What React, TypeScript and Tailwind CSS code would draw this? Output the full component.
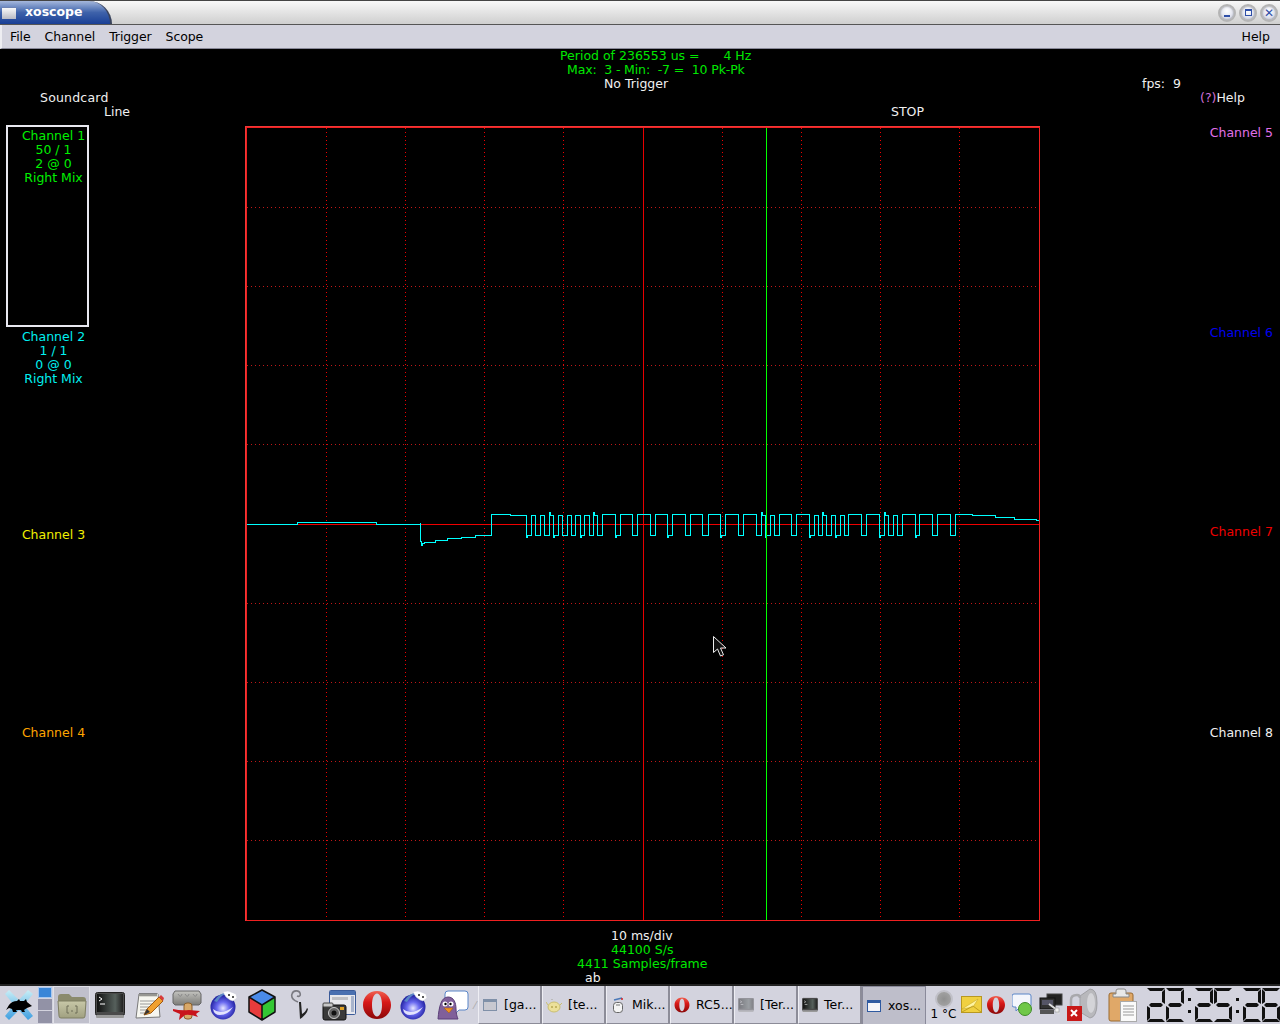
import React from "react";

const T = "text-[12.5px] leading-[14px] whitespace-pre";

const z8 = [48,63,76,90,103,116,128,143,157,170,182,196,209,222,236,248,262,276,314,329,367,381,420,434,472,487,525,539,577,593,630,646,685,698,738,752,765,779,792,806];
const z9 = [32,47,86,101,114,127,139,153,165,180,191,205,244,259,298,312,325,339,352,366,404,418,457,472,510,524];

function tracePath(): string {
  const ox = -245, oy = -126;
  const p: [number, number][] = [];
  const add = (x: number, y: number) => p.push([x + ox + 0.5, y + oy + 0.5]);
  const lead: [number, number][] = [[246,524],[297,524],[297,522],[376,522],[376,524],[420,524],[420,522],[420,541],[421,541],[421,545],[422,545],[422,543],[424,543],[424,542],[435,542],[435,540],[447,540],[447,538],[461,538],[461,537],[475,537],[475,535],[491,535],[491,514],[510,514],[510,515]];
  lead.forEach(([x, y]) => add(x, y));
  const edges = [...z8.map((z) => Math.round(510 + z / 3)), ...z9.map((z) => Math.round(780 + z / 3))];
  edges.forEach((x, i) => {
    const next = edges[i + 1] ?? x + 10;
    if (i % 2 === 0) {
      const lo = i % 6 === 0 ? 537 : 535;
      add(x, 515); add(x, lo); add(x + 1, lo); add(x + 1, 535); add(next, 535);
    } else {
      const hi = next - x > 9 ? 514 : i % 5 === 0 ? 512 : 515;
      add(x, 535); add(x, hi); add(x + 1, hi); add(x + 1, next - x > 9 ? 514 : 515); add(next, next - x > 9 ? 514 : 515);
    }
  });
  const tail: [number, number][] = [[972,514],[972,515],[995,515],[995,517],[1014,517],[1014,519],[1036,519],[1036,520],[1039,520]];
  tail.forEach(([x, y]) => add(x, y));
  return "M" + p.map(([x, y]) => `${x} ${y}`).join("L");
}

function Scope() {
  const v = [326, 405, 484, 563, 722, 801, 880, 959];
  const h = [207, 286, 365, 444, 603, 682, 761, 840];
  return (
    <svg width={796} height={796} viewBox="0 0 796 796" shapeRendering="crispEdges" className="block">
      {v.map((x) => (
        <line key={x} x1={x - 245 + 0.5} x2={x - 245 + 0.5} y1={2} y2={794} stroke="#f00000" strokeDasharray="1 3" />
      ))}
      {h.map((y) => (
        <line key={y} x1={2} x2={794} y1={y - 126 + 0.5} y2={y - 126 + 0.5} stroke="#c01818" strokeDasharray="1 3" />
      ))}
      <line x1={398.5} x2={398.5} y1={2} y2={794} stroke="#e80000" />
      <line x1={2} x2={794} y1={398.5} y2={398.5} stroke="#f00000" />
      <path d={tracePath()} fill="none" stroke="#00ffff" />
      <line x1={521.5} x2={521.5} y1={2} y2={794} stroke="#00ff00" />
      <rect x={0.5} y={0.5} width={794} height={794} fill="none" stroke="#f03838" />
      <rect x={1.5} y={1.5} width={793} height={793} fill="none" stroke="#f02020" />
      <g shapeRendering="auto">
        <path d="M468.5 510.5v16l4-3.500 3 7 3-1.200-3-6.800h5.500z" fill="#111" stroke="#eee" strokeWidth={1} />
      </g>
    </svg>
  );
}

function ChannelText({ children, color }: { children: React.ReactNode; color: string }) {
  return <div className={`${T} ${color} w-[107px] text-center`}>{children}</div>;
}

function Left() {
  return (
    <div className="w-[245px] shrink-0 pt-[42px]">
      <div className={`${T} text-[#f0f0f0] ml-[40px] tracking-[0.2px]`}>Soundcard</div>
      <div className={`${T} text-[#f0f0f0] ml-[104px]`}>Line</div>
      <div className="mt-[6px] ml-[6px] w-[83px] h-[202px] border-2 border-[#e8e8f0] pt-[1px]">
        <div className="ml-[-8px] mt-[1px]">
          <ChannelText color="text-[#00f000]">
            Channel 1{"\n"}50 / 1{"\n"}2 @ 0{"\n"}Right Mix
          </ChannelText>
        </div>
      </div>
      <div className="mt-[3px]">
        <ChannelText color="text-[#00f0f0]">
          Channel 2{"\n"}1 / 1{"\n"}0 @ 0{"\n"}Right Mix
        </ChannelText>
      </div>
      <div className="mt-[142px]">
        <ChannelText color="text-[#f0f000]">Channel 3</ChannelText>
      </div>
      <div className="mt-[184px]">
        <ChannelText color="text-[#ffa500]">Channel 4</ChannelText>
      </div>
    </div>
  );
}

function Center() {
  return (
    <div className="w-[796px] shrink-0">
      <div className="h-[77px]">
        <div className={`${T} text-[#00e800] ml-[315px]`}>Period of 236553 us =      4 Hz</div>
        <div className={`${T} text-[#00e800] ml-[322px] tracking-[-0.13px]`}>Max:  3 - Min:  -7 =  10 Pk-Pk</div>
        <div className={`${T} text-[#f0f0f0] ml-[359px]`}>No Trigger</div>
        <div className={`${T} text-[#f0f0f0] ml-[646px] mt-[14px]`}>STOP</div>
      </div>
      <Scope />
      <div className="mt-[7px]">
        <div className={`${T} text-[#f0f0f0] ml-[366px]`}>10 ms/div</div>
        <div className={`${T} text-[#00e800] ml-[366px]`}>44100 S/s</div>
        <div className={`${T} text-[#00e800] ml-[332px]`}>4411 Samples/frame</div>
        <div className={`${T} text-[#f0f0f0] ml-[340px]`}>ab</div>
      </div>
    </div>
  );
}

function Right() {
  return (
    <div className="flex-1 pt-[28px]">
      <div className={`${T} text-[#f0f0f0] ml-[101px]`}>fps:  9</div>
      <div className={`${T} text-[#f0f0f0] ml-[159px]`}>
        <span className="text-[#d070d8]">(?)</span>Help
      </div>
      <div className={`${T} text-[#e070e8] text-right pr-[7px] mt-[21px]`}>Channel 5</div>
      <div className={`${T} text-[#0000f0] text-right pr-[7px] mt-[186px]`}>Channel 6</div>
      <div className={`${T} text-[#f00000] text-right pr-[7px] mt-[185px]`}>Channel 7</div>
      <div className={`${T} text-[#f0f0f0] text-right pr-[7px] mt-[187px]`}>Channel 8</div>
    </div>
  );
}

function WinBtn({ children }: { children: React.ReactNode }) {
  return (
    <div className="w-[18px] h-[18px] rounded-full border-2 border-[#b4b4b4] bg-[radial-gradient(circle_at_50%_35%,#ffffff,#c8cce0)] flex items-center justify-center shadow-[inset_0_0_2px_#777]">
      {children}
    </div>
  );
}

function TitleBar() {
  return (
    <div className="h-[25px] border-t border-t-[#444] border-b border-b-[#555] bg-linear-to-b from-[#f8f8f8] to-[#cfcfcf] flex items-stretch shrink-0">
      <div className="w-[112px] rounded-tr-[26px] border-r-2 border-r-[#39435c] bg-linear-to-b from-[#a6b8dc] via-[#3e62aa] to-[#1a3f96] flex items-center">
        <div className="ml-[2px] w-[14px] h-[12px] bg-linear-to-b from-[#fafafa] to-[#b8bac4] border-t border-t-[#6f84b4]" />
        <span className="ml-[9px] text-[12.5px] font-bold text-white">xoscope</span>
      </div>
      <div className="flex-1" />
      <div className="flex items-center gap-[3px] pr-[2px]">
        <WinBtn><div className="w-[6px] h-[2px] bg-[#2f4fa8] mt-[6px]" /></WinBtn>
        <WinBtn><div className="w-[7px] h-[7px] border border-[#2f4fa8] border-t-2" /></WinBtn>
        <WinBtn><span className="text-[#2f4fa8] text-[12px] leading-none font-bold">✕</span></WinBtn>
      </div>
    </div>
  );
}

function MenuBar() {
  return (
    <div className={`h-[24px] shrink-0 bg-[#d3d3de] border-l-2 border-l-[#eeeef2] border-b border-b-[#888898] flex items-center justify-between pl-[8px] pr-[10px] ${T} text-black`}>
      <div className="flex gap-[14px] tracking-[-0.1px]">
        <span>File</span>
        <span>Channel</span>
        <span>Trigger</span>
        <span>Scope</span>
      </div>
      <span>Help</span>
    </div>
  );
}

/* ---------- taskbar icons ---------- */
function XMouse() {
  return (
    <svg width="30" height="30" viewBox="0 0 30 30">
      <defs>
        <linearGradient id="xg" x1="0" y1="0" x2="0" y2="1">
          <stop offset="0" stopColor="#c8eef6" />
          <stop offset="1" stopColor="#3f9fe0" />
        </linearGradient>
      </defs>
      <path d="M5 0L15 10 24 0l5 4-9 11 9 11-5 4-9-10-10 10-4-4 9-11-9-11z" fill="url(#xg)" />
      <path d="M5 15q3-4 8-4l2-2 1 2 4 0 2-2 1 3 5 4-5 2-3 2 1 2h-3l-1-2-5 0 1 2h-4l-1-3-3-1-3 2z" fill="#000" />
    </svg>
  );
}
function Folder() {
  return (
    <svg width="30" height="28" viewBox="0 0 30 28">
      <defs>
        <linearGradient id="fg" x1="0" y1="0" x2="0" y2="1">
          <stop offset="0" stopColor="#c8c8a8" />
          <stop offset="1" stopColor="#a0a080" />
        </linearGradient>
      </defs>
      <path d="M1 6q0-3 3-3h8l3 3h11q3 0 3 3v3H1z" fill="#8a8a6c" />
      <path d="M1 10h28l-1 15q0 2-2 2H4q-2 0-2-2z" fill="url(#fg)" stroke="#7e7e62" />
      <path d="M12 15h-2v7h2M18 15h2v7h-2" fill="none" stroke="#6f6f58" />
      <path d="M14 20h2" stroke="#6f6f58" />
    </svg>
  );
}
function Terminal({ size = 30, dim = false }: { size?: number; dim?: boolean }) {
  return (
    <svg width={size} height={size} viewBox="0 0 30 30" opacity={dim ? 0.45 : 1}>
      <defs>
        <linearGradient id="tg" x1="0" y1="0" x2="1" y2="0">
          <stop offset="0" stopColor="#111" />
          <stop offset="0.7" stopColor="#56605c" />
          <stop offset="1" stopColor="#222" />
        </linearGradient>
      </defs>
      <rect x="0.500" y="2.500" width="29" height="23" rx="2" fill="#4a4a4a" stroke="#222" />
      <rect x="2" y="4" width="26" height="18" fill="url(#tg)" />
      <rect x="1" y="25" width="28" height="3" rx="1" fill="#9a9a9a" />
      <path d="M4 7l3 2-3 2M5 14h5" fill="none" stroke="#fff" />
    </svg>
  );
}
function Notepad() {
  return (
    <svg width="30" height="30" viewBox="0 0 30 30">
      <path d="M5 4l19 0 2 23-24 1z" fill="#f6f6f0" stroke="#777" />
      <path d="M5 4h19v3H5z" fill="#d8d8d0" />
      <path d="M6 3v3M8 3v3M10 3v3M12 3v3M14 3v3M16 3v3M18 3v3M20 3v3M22 3v3" stroke="#555" />
      <path d="M6 11h16M6 14h13M6 17h11M6 20h8M6 23h7" stroke="#9a9a9a" />
      <path d="M10 25l3-6 12-12 4 4-12 12z" fill="#f0a030" stroke="#a05a10" />
      <path d="M25 7l2-2 3 3-1 3z" fill="#d83a3a" />
      <path d="M10 25l3-6 3 3z" fill="#333" />
    </svg>
  );
}
function Scroll() {
  return (
    <svg width="30" height="32" viewBox="0 0 30 32">
      <defs>
        <linearGradient id="sg" x1="0" y1="0" x2="0" y2="1">
          <stop offset="0" stopColor="#c4c4c0" />
          <stop offset="1" stopColor="#7c7c78" />
        </linearGradient>
      </defs>
      <path d="M3 2h24l2 3v9l-2 2H3l-2-2V5z" fill="url(#sg)" stroke="#666" />
      <path d="M6 5c2 3 3 3 4 0M13 5c2 3 3 3 4 0M21 5c2 3 3 3 4 0" stroke="#888" fill="none" />
      <rect x="12" y="14" width="8" height="16" rx="3" fill="#d8a868" stroke="#8a5f2a" />
      <path d="M1 20q8 2 16 1l11 1-4 3 2 3q-8-3-13-2l-6 5 1-6-7-3z" fill="#c8141c" />
    </svg>
  );
}
function Globe() {
  return (
    <svg width="28" height="30" viewBox="0 0 28 30">
      <defs>
        <radialGradient id="gg" cx="0.5" cy="0.55" r="0.55">
          <stop offset="0" stopColor="#e8e8ff" />
          <stop offset="0.45" stopColor="#6a6af0" />
          <stop offset="1" stopColor="#1a1a98" />
        </radialGradient>
      </defs>
      <circle cx="13" cy="17" r="12.500" fill="url(#gg)" />
      <path d="M3 19q8 7 20-2-5 8-13 8-6 0-7-6z" fill="#f0f0ff" opacity="0.9" />
      <path d="M4 11q5-8 14-9 2 0 2 1-9 1-13 9z" fill="#5a86c8" />
      <path d="M13 2q5-2 8 0l5 2 1 4-4 3-3-1-4-3z" fill="#fff" stroke="#c8c8d8" strokeWidth="0.500" />
      <circle cx="19" cy="5" r="1" fill="#222" />
      <circle cx="23" cy="7" r="1" fill="#222" />
    </svg>
  );
}
function Cube() {
  return (
    <svg width="28" height="32" viewBox="0 0 28 32">
      <path d="M14 1L27 8 14 16 1 8z" fill="#4a8ae8" />
      <path d="M1 8L14 16V31L1 23z" fill="#e83c3c" />
      <path d="M27 8L14 16V31L27 23z" fill="#34c834" />
      <path d="M14 1L27 8V23L14 31 1 23V8zM1 8L14 16 27 8M14 16V31" fill="none" stroke="#111" strokeWidth="1.500" strokeLinejoin="round" />
    </svg>
  );
}
function Pin() {
  return (
    <svg width="20" height="32" viewBox="0 0 20 32">
      <path d="M8 13C3 11 1 8 2 5 3 1 9 1 10 4c1 3-1 4-3 3" fill="none" stroke="#7a7a82" strokeWidth="1.600" />
      <path d="M9 13l1 17c3-2 7-5 8-10l-1-1c-1 3-3 5-5 6l-1-12z" fill="#222" />
    </svg>
  );
}
function Camera() {
  return (
    <svg width="34" height="32" viewBox="0 0 34 32">
      <rect x="7.500" y="1.500" width="26" height="24" rx="1" fill="#e8e8ec" stroke="#3a5a98" />
      <rect x="8" y="2" width="25" height="4" fill="#4a70b0" />
      <rect x="10" y="8" width="16" height="3" fill="#c0c0c4" />
      <rect x="29" y="7" width="3" height="16" fill="#a8b4cc" />
      <rect x="1" y="16" width="23" height="15" rx="2" fill="#3a3a3a" stroke="#111" />
      <rect x="1" y="14" width="10" height="4" rx="1" fill="#c8c8c8" stroke="#444" />
      <circle cx="12" cy="24" r="5.500" fill="#666" stroke="#ccc" />
      <circle cx="12" cy="24" r="2.500" fill="#111" />
      <rect x="18" y="18" width="4" height="3" fill="#e0a020" />
    </svg>
  );
}
function Opera({ w = 28, h = 30 }: { w?: number; h?: number }) {
  return (
    <svg width={w} height={h} viewBox="0 0 28 30">
      <defs>
        <linearGradient id="og" x1="0" y1="0" x2="0" y2="1">
          <stop offset="0" stopColor="#f06050" />
          <stop offset="0.4" stopColor="#d81818" />
          <stop offset="1" stopColor="#8a0808" />
        </linearGradient>
      </defs>
      <path fillRule="evenodd" d="M14 1c8 0 14 6 14 14s-6 14-14 14S0 23 0 15 6 1 14 1zm0 2.500c-3 0-5 5-5 11.500s2 11.500 5 11.500 5-5 5-11.500S17 3.500 14 3.500z" fill="url(#og)" />
    </svg>
  );
}
function Pidgin() {
  return (
    <svg width="33" height="32" viewBox="0 0 33 32">
      <path d="M12 2h17q3 0 3 3v13q0 3-3 3h-6l-4 4v-4h-7q-3 0-3-3V5q0-3 3-3z" fill="#fff" stroke="#5a86c8" />
      <path d="M2 30C3 18 5 8 12 8c6 0 8 6 8 12 0 4 1 8 2 10z" fill="#80609a" stroke="#5a3f78" />
      <circle cx="9" cy="15" r="2.500" fill="#fff" />
      <circle cx="15" cy="15" r="2.500" fill="#fff" />
      <circle cx="9.500" cy="15" r="1.200" fill="#000" />
      <circle cx="14.500" cy="15" r="1.200" fill="#000" />
      <path d="M8 19h9l-4 5z" fill="#f09020" stroke="#a05a10" strokeWidth="0.500" />
    </svg>
  );
}
function TinyWindow({ active = false }: { active?: boolean }) {
  return (
    <svg width="16" height="16" viewBox="0 0 16 16">
      <rect x="1.500" y="2.500" width="13" height="11" fill={active ? "#f4f4f8" : "#c8c8d0"} stroke={active ? "#2f5aa0" : "#8090a8"} />
      <rect x="1" y="2" width="14" height="3" fill={active ? "#2f5aa0" : "#8090a8"} />
    </svg>
  );
}
function Teapot() {
  return (
    <svg width="16" height="16" viewBox="0 0 16 16">
      <ellipse cx="8" cy="10" rx="6" ry="5" fill="#ece09a" stroke="#cbbf70" />
      <path d="M2 8L0 5M14 8l2-2" stroke="#cbbf70" />
      <path d="M5 3q1-2 2 0" stroke="#bbb" fill="none" />
      <circle cx="6" cy="10" r="1" fill="#b8a850" />
      <circle cx="10" cy="10" r="1" fill="#b8a850" />
    </svg>
  );
}
function Bottle() {
  return (
    <svg width="16" height="16" viewBox="0 0 16 16">
      <path d="M4 3l8-2" stroke="#4a78b8" strokeWidth="1.500" />
      <circle cx="12" cy="2" r="1" fill="#d82020" />
      <rect x="3.500" y="5.500" width="9" height="10" rx="3" fill="#f4f4f4" stroke="#666" />
      <path d="M6 8h4" stroke="#777" />
    </svg>
  );
}

function Task({ icon, label, active = false }: { icon: React.ReactNode; label: string; active?: boolean }) {
  return (
    <div
      className={
        active
          ? "w-[64px] h-[38px] flex items-center pl-[3px] pr-[2px] border-t border-[#8a8a9a] border-l border-r bg-[#bebeca] text-[12.5px] text-black shrink-0"
          : "w-[64px] h-[38px] flex items-center pl-[3px] pr-[2px] border-r-2 border-r-[#8c8c98] border-l border-l-[#eeeef4] border-b border-b-[#8c8c98] bg-[#d3d3de] text-[12.5px] text-black shrink-0"
      }
    >
      <div className="w-[22px] flex justify-start shrink-0">{icon}</div>
      <span className="whitespace-pre pt-[2px]">{label}</span>
    </div>
  );
}

function Launcher({ w, children }: { w: string; children: React.ReactNode }) {
  return <div className={`${w} h-full flex items-center justify-center shrink-0`}>{children}</div>;
}

function Digit({ on }: { on: string }) {
  return (
    <div className="relative w-[18px] h-[34px] shrink-0">
      {on.includes("a") && <div className="absolute left-0 right-0 top-0 h-[3px] bg-[#111] [clip-path:polygon(0_0,100%_0,calc(100%_-_3px)_100%,3px_100%)]" />}
      {on.includes("g") && <div className="absolute left-[2px] right-[2px] top-[15px] h-[4px] bg-[#111] [clip-path:polygon(2px_0,calc(100%_-_2px)_0,100%_50%,calc(100%_-_2px)_100%,2px_100%,0_50%)]" />}
      {on.includes("d") && <div className="absolute left-0 right-0 bottom-0 h-[3px] bg-[#111] [clip-path:polygon(3px_0,calc(100%_-_3px)_0,100%_100%,0_100%)]" />}
      {on.includes("f") && <div className="absolute left-0 top-[1px] w-[3px] h-[15px] bg-[#111] [clip-path:polygon(0_0,100%_3px,100%_calc(100%_-_2px),0_100%)]" />}
      {on.includes("e") && <div className="absolute left-0 bottom-[1px] w-[3px] h-[15px] bg-[#111] [clip-path:polygon(0_0,100%_2px,100%_calc(100%_-_3px),0_100%)]" />}
      {on.includes("b") && <div className="absolute right-0 top-[1px] w-[3px] h-[15px] bg-[#111] [clip-path:polygon(100%_0,0_3px,0_calc(100%_-_2px),100%_100%)]" />}
      {on.includes("c") && <div className="absolute right-0 bottom-[1px] w-[3px] h-[15px] bg-[#111] [clip-path:polygon(100%_0,0_2px,0_calc(100%_-_3px),100%_100%)]" />}
    </div>
  );
}
function Colon() {
  return (
    <div className="w-[9px] h-[34px] flex flex-col items-center justify-center gap-[9px] shrink-0">
      <div className="w-[3px] h-[3px] bg-[#111]" />
      <div className="w-[3px] h-[3px] bg-[#111]" />
    </div>
  );
}
const D2 = "abged";
const D5 = "afgcd";
const D6 = "afgcde";
function Clock() {
  return (
    <div aria-label="22:25:26" className="flex items-center gap-[1px] ml-[2px]">
      <Digit on={D2} /><Digit on={D2} /><Colon />
      <Digit on={D2} /><Digit on={D5} /><Colon />
      <Digit on={D2} /><Digit on={D6} />
    </div>
  );
}

function Envelope() {
  return (
    <svg width="22" height="20" viewBox="0 0 22 20">
      <rect x="0.500" y="1.500" width="20" height="16" fill="#f0d040" stroke="#b89820" />
      <path d="M1 14L17 4l-5 8z" fill="#fff4a0" stroke="#c0a020" strokeWidth="0.500" />
      <path d="M1 17L12 11l8 6" fill="none" stroke="#c0a020" />
    </svg>
  );
}
function ChatGreen() {
  return (
    <svg width="22" height="24" viewBox="0 0 22 24">
      <path d="M2 1h15q2 0 2 2v9q0 2-2 2H8l-4 4v-4H2q-2 0-2-2V3q0-2 2-2z" fill="#f4f6fc" stroke="#5a86c8" />
      <circle cx="13" cy="16" r="6.500" fill="#70c848" stroke="#3f8a28" />
    </svg>
  );
}
function Network() {
  return (
    <svg width="24" height="24" viewBox="0 0 24 24">
      <rect x="8" y="1" width="15" height="11" fill="#222" stroke="#444" />
      <rect x="1" y="5" width="15" height="11" fill="#333" stroke="#111" />
      <rect x="3" y="7" width="11" height="5" fill="#556" />
      <rect x="1" y="17" width="14" height="4" fill="#555" />
      <path d="M10 11l8 6 2 4" stroke="#ddd" strokeWidth="2" fill="none" />
      <rect x="16" y="15" width="4" height="4" fill="#f0f0f0" stroke="#888" strokeWidth="0.500" />
    </svg>
  );
}
function Speaker() {
  return (
    <svg width="32" height="34" viewBox="0 0 32 34">
      <path d="M13 8l10-7q7 0 7 14t-7 15l-10-6z" fill="#b8b8bc" stroke="#a0a0a4" />
      <ellipse cx="24" cy="15" rx="4" ry="10" fill="#d4d4d8" />
      <path d="M4 18v-6q0-5 6-5 3 0 3 3" fill="none" stroke="#a8a8ac" strokeWidth="2.500" />
      <rect x="0" y="18" width="15" height="15" fill="#c81818" />
      <path d="M4 22l6 6M10 22l-6 6" stroke="#fff" strokeWidth="2" />
    </svg>
  );
}
function Clipboard() {
  return (
    <svg width="30" height="34" viewBox="0 0 30 34">
      <rect x="1" y="5" width="24" height="28" rx="2" fill="#e0a868" stroke="#9a6a30" />
      <path d="M8 6V3q0-2 2-2h6q2 0 2 2v3h3v3H5V6z" fill="#e8e8e8" stroke="#888" />
      <rect x="12.500" y="13.500" width="16" height="20" fill="#fafafa" stroke="#aaa" />
      <path d="M15 18h11M15 21h11M15 24h11M15 27h11" stroke="#999" />
    </svg>
  );
}

function Taskbar() {
  return (
    <div className="h-[40px] shrink-0 bg-[#d3d3de] border-t-2 border-t-[#222] flex items-center overflow-hidden text-black">
      <Launcher w="w-[38px]"><XMouse /></Launcher>
      <div className="w-[15px] h-full flex flex-col gap-[1px] items-start shrink-0 pt-[1px]">
        <div className="w-[14px] h-[11px] bg-[#3a86d8] border border-[#a8c8f0]" />
        <div className="w-[14px] h-[11px] bg-[#9292a6]" />
        <div className="w-[14px] h-[12px] bg-[#9292a6]" />
      </div>
      <div className="w-[37px] h-full bg-[#c0c0cc] border border-[#e0e0e8] flex items-center justify-center shrink-0"><Folder /></div>
      <Launcher w="w-[39px]"><Terminal /></Launcher>
      <Launcher w="w-[39px]"><Notepad /></Launcher>
      <Launcher w="w-[37px]"><Scroll /></Launcher>
      <Launcher w="w-[38px]"><Globe /></Launcher>
      <Launcher w="w-[38px]"><Cube /></Launcher>
      <Launcher w="w-[38px]"><Pin /></Launcher>
      <Launcher w="w-[39px]"><Camera /></Launcher>
      <Launcher w="w-[37px]"><Opera /></Launcher>
      <Launcher w="w-[38px]"><Globe /></Launcher>
      <Launcher w="w-[39px]"><Pidgin /></Launcher>
      <div className="w-[6px] shrink-0 flex justify-center text-[#aaa] text-[10px]">⁄</div>
      <div className="flex self-end">
        <Task icon={<TinyWindow />} label="[ga..." />
        <Task icon={<Teapot />} label="[te..." />
        <Task icon={<Bottle />} label="Mik..." />
        <Task icon={<Opera w={16} h={16} />} label="RC5..." />
        <Task icon={<Terminal size={16} dim />} label="[Ter..." />
        <Task icon={<Terminal size={16} />} label="Ter..." />
        <Task icon={<TinyWindow active />} label="xos..." active />
      </div>
      <div className="w-[35px] h-full flex flex-col items-center justify-center shrink-0">
        <div className="w-[18px] h-[18px] rounded-full bg-[radial-gradient(circle,#909090,#a8a8a8)] border-2 border-[#c0c0c8]" />
        <span className="text-[12px] leading-[13px] whitespace-pre">1 °C</span>
      </div>
      <Launcher w="w-[22px]"><Envelope /></Launcher>
      <Launcher w="w-[26px]"><Opera w={18} h={20} /></Launcher>
      <Launcher w="w-[27px]"><ChatGreen /></Launcher>
      <Launcher w="w-[29px]"><Network /></Launcher>
      <Launcher w="w-[36px]"><Speaker /></Launcher>
      <Launcher w="w-[44px]"><Clipboard /></Launcher>
      <Clock />
    </div>
  );
}

export default function App() {
  return (
    <div className="w-[1280px] h-[1024px] flex flex-col overflow-hidden bg-black font-['DejaVu_Sans',sans-serif]">
      <TitleBar />
      <MenuBar />
      <div className="flex-1 flex min-h-0 overflow-hidden">
        <Left />
        <Center />
        <Right />
      </div>
      <Taskbar />
    </div>
  );
}
